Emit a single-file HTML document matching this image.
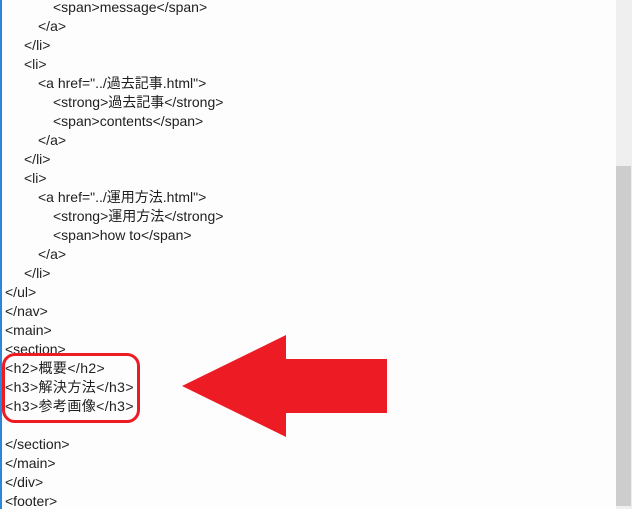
<!DOCTYPE html>
<html><head><meta charset="utf-8"><style>
html,body{margin:0;padding:0;width:632px;height:509px;overflow:hidden;background:#fdfdfd;}
body{position:relative;font-family:"Liberation Sans","Noto Sans CJK JP",sans-serif;font-size:14px;color:#1e1e1e;}
.edge{position:absolute;left:0;top:0;width:2px;height:509px;background:#2b88d8;}
.l{position:absolute;white-space:pre;line-height:19px;height:19px;margin-top:1px;}
.j{letter-spacing:0.4px;}
.track{position:absolute;left:616px;top:0;width:16px;height:509px;background:#efefef;}
.thumb{position:absolute;left:616px;top:166px;width:15px;height:340px;background:#cdcdcd;}
.box{position:absolute;left:2px;top:353px;width:132px;height:64px;border:3px solid #ed1c24;border-radius:13px;}
</style></head><body>
<div class="edge"></div>
<div class="l" style="left:53px;top:-3px">&lt;span&gt;message&lt;/span&gt;</div>
<div class="l" style="left:38px;top:16px">&lt;/a&gt;</div>
<div class="l" style="left:24px;top:35px">&lt;/li&gt;</div>
<div class="l" style="left:24px;top:54px">&lt;li&gt;</div>
<div class="l" style="left:38px;top:73px">&lt;a href="../過去記事.html"&gt;</div>
<div class="l" style="left:53px;top:92px">&lt;strong&gt;過去記事&lt;/strong&gt;</div>
<div class="l" style="left:53px;top:111px">&lt;span&gt;contents&lt;/span&gt;</div>
<div class="l" style="left:38px;top:130px">&lt;/a&gt;</div>
<div class="l" style="left:24px;top:149px">&lt;/li&gt;</div>
<div class="l" style="left:24px;top:168px">&lt;li&gt;</div>
<div class="l" style="left:38px;top:187px">&lt;a href="../運用方法.html"&gt;</div>
<div class="l" style="left:53px;top:206px">&lt;strong&gt;運用方法&lt;/strong&gt;</div>
<div class="l" style="left:53px;top:225px">&lt;span&gt;how to&lt;/span&gt;</div>
<div class="l" style="left:38px;top:244px">&lt;/a&gt;</div>
<div class="l" style="left:24px;top:263px">&lt;/li&gt;</div>
<div class="l" style="left:5px;top:282px">&lt;/ul&gt;</div>
<div class="l" style="left:5px;top:301px">&lt;/nav&gt;</div>
<div class="l" style="left:5px;top:320px">&lt;main&gt;</div>
<div class="l" style="left:5px;top:339px">&lt;section&gt;</div>
<div class="l j" style="left:5px;top:358px">&lt;h2&gt;概要&lt;/h2&gt;</div>
<div class="l j" style="left:5px;top:377px">&lt;h3&gt;解決方法&lt;/h3&gt;</div>
<div class="l j" style="left:5px;top:396px">&lt;h3&gt;参考画像&lt;/h3&gt;</div>
<div class="l" style="left:5px;top:434px">&lt;/section&gt;</div>
<div class="l" style="left:5px;top:453px">&lt;/main&gt;</div>
<div class="l" style="left:5px;top:472px">&lt;/div&gt;</div>
<div class="l" style="left:5px;top:491px">&lt;footer&gt;</div>
<div class="box"></div>
<svg style="position:absolute;left:0;top:0" width="632" height="509"><polygon points="182,386 286,335 286,359 387,359 387,413 286,413 286,437" fill="#ed1c24"/></svg>
<div class="track"></div><div class="thumb"></div>
</body></html>
